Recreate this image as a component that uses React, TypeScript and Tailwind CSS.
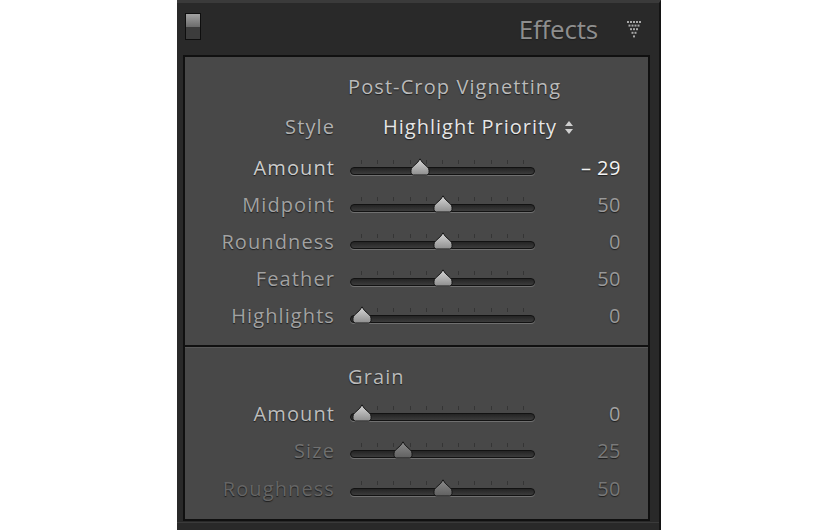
// Lightroom-style "Effects" panel

const font = { fontFamily: '"Open Sans", "Noto Sans", sans-serif' };

const Knob = ({ dim }: { dim?: boolean }) => (
  <svg width="20" height="18" viewBox="0 0 20 18" className="block">
    <defs>
      <linearGradient id={dim ? 'kd' : 'kl'} x1="0" y1="0" x2="0" y2="1">
        <stop offset="0" stopColor={dim ? '#8c8c8c' : '#d8d8d8'} />
        <stop offset="1" stopColor={dim ? '#606060' : '#8e8e8e'} />
      </linearGradient>
    </defs>
    <path
      d="M10 0.8 L12.2 4.2 L17.6 9.2 Q19 10.4 19 12.4 L19 14.6 Q19 17 16.6 17 L3.4 17 Q1 17 1 14.6 L1 12.4 Q1 10.4 2.4 9.2 L7.8 4.2 Z"
      fill={`url(#${dim ? 'kd' : 'kl'})`}
      stroke="#161616"
      strokeWidth="1"
    />
  </svg>
);

const ticks = Array.from({ length: 11 }, (_, i) => 11 + i * 16.2);

const Slider = ({ pos, dim }: { pos: number; dim?: boolean }) => (
  <div className="relative w-[185px] h-[22px]">
    {ticks.map((x, i) => (
      <div
        key={i}
        className="absolute top-[3px] w-px h-[4px] bg-[#353535]"
        style={{ left: Math.round(x) }}
      />
    ))}
    {/* track groove */}
    <div className="absolute left-0 right-0 top-[10px] h-[8px] rounded-full border border-[#121212] bg-gradient-to-b from-[#242424] to-[#3c3c3c] shadow-[0_1px_0_#707070]" />
    <div className="absolute top-[1px]" style={{ left: Math.round(12 + pos * 162) - 10 }}>
      <Knob dim={dim} />
    </div>
  </div>
);

type Row = { label: string; pos: number; value: string; lc: string; vc: string; dim?: boolean };

const SliderRow = ({ r, h = 'h-[37px]' }: { r: Row; h?: string }) => (
  <div className={`flex items-center ${h}`}>
    <div className={`w-[150px] text-right text-[20px] tracking-[1.1px] ${r.lc}`}>{r.label}</div>
    <div className="ml-[15px] pt-[1px]">
      <Slider pos={r.pos} dim={r.dim} />
    </div>
    <div className={`w-[86px] text-right text-[20px] tracking-[0.5px] ${r.vc}`}>{r.value}</div>
  </div>
);

const vignette: Row[] = [
  { label: 'Amount', pos: 0.355, value: '– 29', lc: 'text-[#cccccc]', vc: 'text-[#f2f2f2] font-medium' },
  { label: 'Midpoint', pos: 0.5, value: '50', lc: 'text-[#a2a2a2]', vc: 'text-[#999999]' },
  { label: 'Roundness', pos: 0.5, value: '0', lc: 'text-[#a2a2a2]', vc: 'text-[#999999]' },
  { label: 'Feather', pos: 0.5, value: '50', lc: 'text-[#a2a2a2]', vc: 'text-[#999999]' },
  { label: 'Highlights', pos: 0, value: '0', lc: 'text-[#a2a2a2]', vc: 'text-[#999999]' },
];

const grain: Row[] = [
  { label: 'Amount', pos: 0, value: '0', lc: 'text-[#bdbdbd]', vc: 'text-[#a2a2a2]' },
  { label: 'Size', pos: 0.25, value: '25', lc: 'text-[#707070]', vc: 'text-[#7a7a7a]', dim: true },
  { label: 'Roughness', pos: 0.5, value: '50', lc: 'text-[#656565]', vc: 'text-[#777777]', dim: true },
];

const DotTriangle = () => (
  <svg width="16" height="19" viewBox="0 0 16 19" className="block">
    {[5, 4, 3, 2, 1].map((n, row) =>
      Array.from({ length: n }, (_, i) => (
        <rect
          key={`${row}-${i}`}
          x={1 + row * 1.5 + i * 3}
          y={1 + row * 3.6}
          width="2"
          height="2"
          fill="#a8a8a8"
        />
      ))
    )}
  </svg>
);

const UpDown = () => (
  <svg width="12" height="15" viewBox="0 0 12 15" className="block">
    <path d="M6 1 L10 6 L2 6 Z" fill="#cfcfcf" />
    <path d="M6 14 L10 9 L2 9 Z" fill="#cfcfcf" />
  </svg>
);

export default function App() {
  return (
    <div className="w-[840px] h-[530px] bg-white overflow-hidden [text-shadow:0_1px_1px_#1e1e1e]" style={font}>
      <div className="ml-[177px] w-[484px] h-[530px] bg-[#292929] border-t-[3px] border-[#3a3a3a] border-r-2 border-r-[#141414] flex flex-col">
        {/* header */}
        <div className="h-[52px] flex items-start shrink-0">
          <div className="ml-[8px] mt-[10px] w-[16px] h-[27px] border border-[#0e0e0e] flex flex-col">
            <div className="h-1/2 bg-gradient-to-b from-[#a2a2a2] to-[#6c6c6c]" />
            <div className="h-1/2 bg-[#3c3c3c]" />
          </div>
          <div className="ml-auto mt-[8px] text-[26px] text-[#8e8e8e] leading-[36px] tracking-[-0.2px]">Effects</div>
          <div className="ml-[28px] mr-[17px] mt-[17px]">
            <DotTriangle />
          </div>
        </div>

        {/* inner box */}
        <div className="ml-[6px] mr-[9px] h-[466px] border-2 border-[#101010] bg-[#484848] flex flex-col shrink-0">
          <div className="pt-[11px] pb-[11px]">
            <div className="h-[37px] flex items-center pl-[163px] text-[20px] tracking-[1.1px] text-[#bababa]">
              Post-Crop Vignetting
            </div>
            <div className="h-[44px] flex items-center">
              <div className="w-[150px] text-right text-[20px] tracking-[1.1px] text-[#b0b0b0]">Style</div>
              <div className="ml-[48px] text-[20px] tracking-[1px] text-[#e6e6e6]">Highlight Priority</div>
              <div className="ml-[6px] mt-[1px]">
                <UpDown />
              </div>
            </div>
            {vignette.map((r) => (
              <SliderRow key={r.label} r={r} />
            ))}
          </div>
          <div className="h-[3px] border-t-2 border-[#101010] bg-[#585858] shrink-0" />
          <div className="pt-[10px]">
            <div className="h-[37px] flex items-center pl-[163px] text-[20px] tracking-[1.1px] text-[#bababa]">
              Grain
            </div>
            {grain.map((r, i) => (
              <SliderRow key={r.label} r={r} h={i === 2 ? 'h-[39px]' : 'h-[37px]'} />
            ))}
          </div>
        </div>
        <div className="mt-[1px] border-t border-[#3a3a3a] flex-1" />
      </div>
    </div>
  );
}
